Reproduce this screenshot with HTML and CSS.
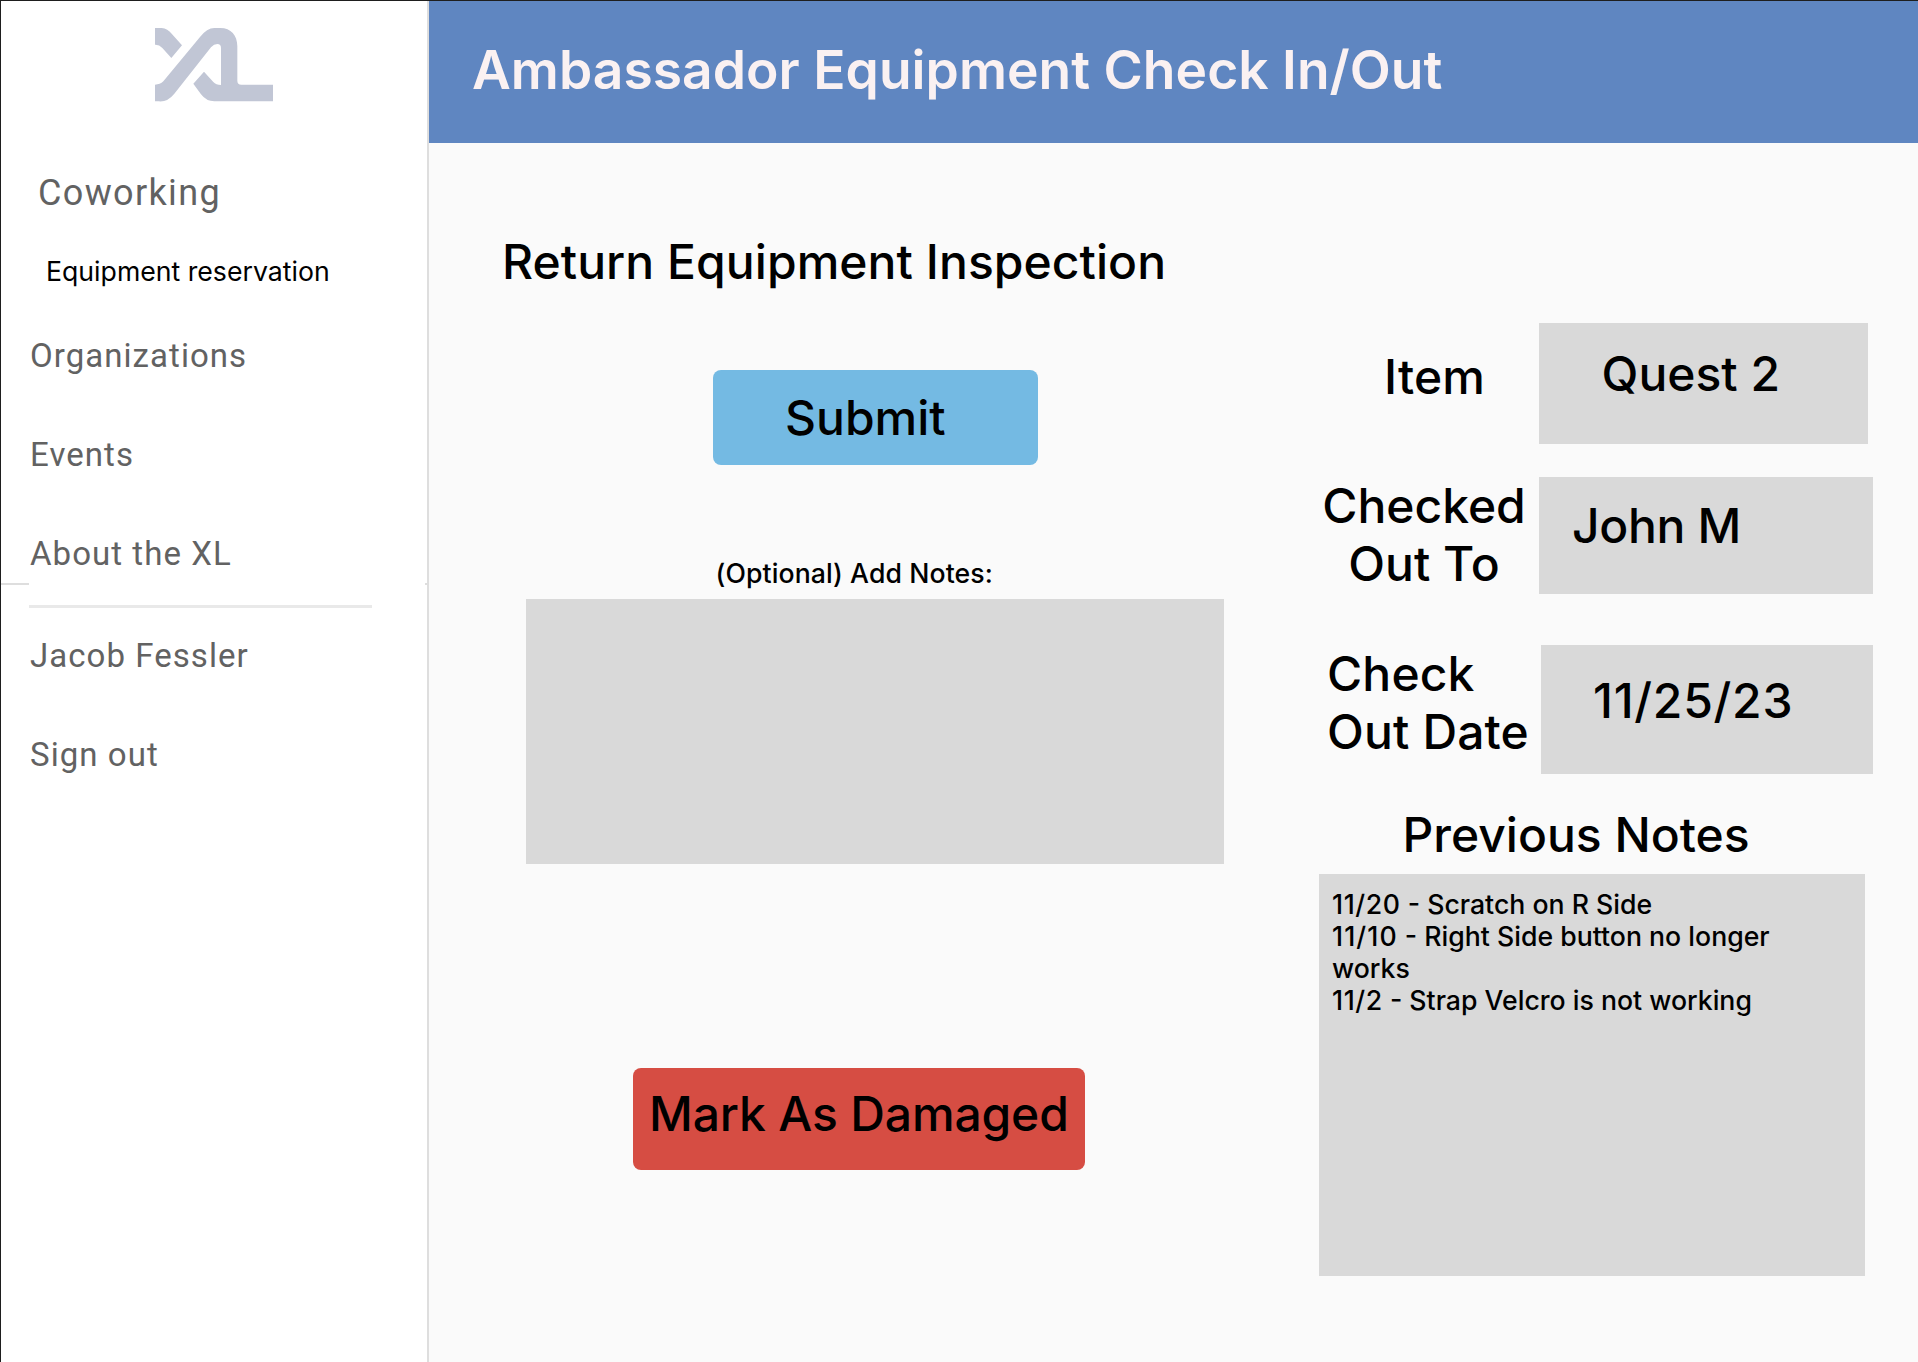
FILE: index.html
```html
<!DOCTYPE html>
<html lang="en">
<head>
<meta charset="utf-8">
<title>Ambassador Equipment Check In/Out</title>
<link rel="stylesheet" href="styles.css">
</head>
<body>
<div class="app">
  <aside class="sidebar">
    <svg class="logo" viewBox="0 0 354 222" preserveAspectRatio="none" aria-hidden="true">
      <path d="M0 0H20Q38 2 50 17L81 52L49 90L22 60Q12 49 0 50Z"/>
      <path d="M0 170Q15 170 25 160L135 27Q156 0 178 0H196C228 0 247 22 247 55V158Q247 170 259 170H354V220H178Q154 220 138 199L115 167L147 131L175 162Q183 171 198 171V60Q198 48 187 48Q177 48 168 58L58 197Q38 222 12 220H0Z"/>
    </svg>
    <nav class="nav">
      <a class="nav-item coworking">Coworking</a>
      <a class="nav-sub">Equipment reservation</a>
      <a class="nav-item organizations">Organizations</a>
      <a class="nav-item events">Events</a>
      <a class="nav-item about">About the XL</a>
    </nav>
    <div class="seam"><span class="seam-left"></span><span class="seam-right"></span></div>
    <hr class="divider">
    <nav class="nav account">
      <a class="nav-item user">Jacob Fessler</a>
      <a class="nav-item signout">Sign out</a>
    </nav>
  </aside>
  <div class="main">
    <header class="header"><h1 class="header-title">Ambassador Equipment Check In/Out</h1></header>
    <div class="content">
      <section class="inspection">
        <h2 class="title">Return Equipment Inspection</h2>
        <button class="button submit">Submit</button>
        <label class="notes-label" for="notes">(Optional) Add Notes:</label>
        <textarea class="notes-input" id="notes"></textarea>
        <button class="button damaged">Mark As Damaged</button>
      </section>
      <section class="details">
        <div class="row row-item">
          <div class="label">Item</div>
          <div class="value">Quest 2</div>
        </div>
        <div class="row row-person">
          <div class="label">Checked<br>Out To</div>
          <div class="value">John M</div>
        </div>
        <div class="row row-date">
          <div class="label">Check<br>Out Date</div>
          <div class="value">11/25/23</div>
        </div>
        <h3 class="previous-title">Previous Notes</h3>
        <div class="previous">
          <p><span class="date">11/20</span> - Scratch on R Side</p>
          <p><span class="date date-wide">11/10</span> - Right Side button no longer<br>works</p>
          <p><span class="date">11/2</span> - Strap Velcro is not working</p>
        </div>
      </section>
    </div>
  </div>
</div>
</body>
</html>
```
FILE: styles.css
```css
* { box-sizing: border-box; }

body {
  margin: 0;
  background: #fafafa;
  color: #000;
  font-family: Inter, "Liberation Sans", sans-serif;
}

h1, h2, h3, p { margin: 0; font-weight: 500; }

.app {
  display: flex;
  width: 1918px;
  height: 1362px;
  overflow: hidden;
  border-top: 1px solid #1e1e1e;
  border-left: 1px solid #1e1e1e;
}

/* Sidebar */
.sidebar {
  display: flex;
  flex-direction: column;
  flex: 0 0 428px;
  background: #fff;
  border-right: 2px solid #dedede;
}

.logo {
  flex: none;
  width: 118px;
  height: 74px;
  margin: 27px 0 0 154px;
  fill: #c1c6d5;
}

.nav { display: flex; flex-direction: column; }

.nav-item {
  height: 40px;
  padding-left: 29px;
  font: 400 33px/40px Roboto, "Liberation Sans", sans-serif;
  letter-spacing: 1.05px;
  color: #626262;
  white-space: nowrap;
}

.coworking {
  margin-top: 71px;
  padding-left: 37px;
  font-size: 36px;
  letter-spacing: 1.35px;
}

.nav-sub {
  margin-top: 42px;
  padding-left: 45px;
  font-size: 26.67px;
  line-height: 32px;
  white-space: nowrap;
}

.organizations { margin-top: 49px; }
.events { margin-top: 59px; }
.about { margin-top: 59px; }

.seam {
  display: flex;
  justify-content: space-between;
  height: 2px;
  margin-top: 9px;
}

.seam-left { width: 28px; background: #dedede; }
.seam-right { width: 2px; background: #dedede; }

.divider {
  flex: none;
  width: 343px;
  height: 3px;
  margin: 20px 0 0 28px;
  border: 0;
  background: #e9e9e9;
}

.user { margin-top: 28px; }
.signout { margin-top: 59px; }

/* Main area */
.main { flex: 1; display: flex; flex-direction: column; }

.header {
  height: 142px;
  padding: 37px 0 0 43px;
  background: #5f86c1;
}

.header-title {
  color: #faf1f2;
  font-size: 53.33px;
  font-weight: 600;
  letter-spacing: 0.04px;
  line-height: 64px;
  white-space: nowrap;
}

.content { display: flex; flex: 1; }

.inspection {
  display: flex;
  flex-direction: column;
  align-items: flex-start;
  flex: 0 0 890px;
}

.title {
  margin: 90px 0 0 73px;
  font-size: 48px;
  letter-spacing: 0.06px;
  line-height: 58px;
  white-space: nowrap;
}

.button {
  border: 0;
  border-radius: 8px;
  color: #000;
  font: 500 48px/58px Inter, "Liberation Sans", sans-serif;
  text-align: left;
  white-space: nowrap;
}

.submit {
  width: 324.5px;
  height: 95px;
  margin: 79px 0 0 284px;
  padding: 0 0 0 72px;
  background: #74bae3;
}

.notes-label {
  margin: 92px 0 0 286.5px;
  font-size: 26.67px;
  font-weight: 500;
  letter-spacing: 0.09px;
  line-height: 32px;
  white-space: nowrap;
}

.notes-input {
  width: 698px;
  height: 265px;
  margin: 10px 0 0 97px;
  border: 0;
  resize: none;
  background: #d9d9d9;
}

.damaged {
  width: 451.5px;
  height: 102px;
  margin: 204px 0 0 204px;
  padding: 0 0 10px 16px;
  background: #d64d43;
  letter-spacing: -0.15px;
}

/* Equipment details */
.details { flex: 1; padding-top: 180px; }

.row { display: flex; font-size: 48px; font-weight: 500; line-height: 58px; white-space: nowrap; }
.label { flex: 0 0 220px; }
.value { background: #d9d9d9; }

.row-item .label { padding: 25px 0 0 65px; letter-spacing: 0.15px; }
.row-item .value { width: 329px; height: 121px; padding: 22px 0 0 62.5px; }

.row-person { margin-top: 33px; }
.row-person .label { padding-right: 10px; text-align: center; }
.row-person .value { width: 334px; height: 117px; padding: 20px 0 0 33px; letter-spacing: -0.35px; }

.row-date { margin-top: 51px; }
.row-date .label { flex-basis: 222px; padding-left: 8px; letter-spacing: 0.15px; }
.row-date .value { width: 332px; height: 129px; padding: 27px 0 0 52px; letter-spacing: 0.75px; }

.previous-title {
  margin: 32px 0 0 83.5px;
  font-size: 48px;
  line-height: 58px;
}

.previous {
  width: 546px;
  height: 402px;
  margin-top: 10px;
  padding: 14px 60px 0 13px;
  background: #d9d9d9;
  font-size: 26.67px;
  line-height: 32px;
  white-space: nowrap;
}

.date { letter-spacing: 0.6px; }
.date-wide { letter-spacing: 1.1px; }
```
